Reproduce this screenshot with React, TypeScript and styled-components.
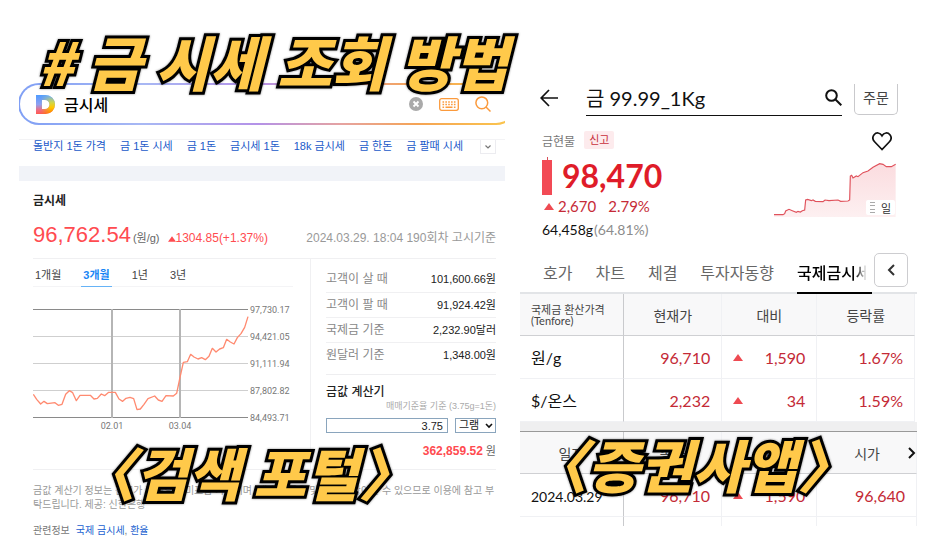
import React from "react";
import styled, { createGlobalStyle, css } from "styled-components";

const KR = `"Noto Sans CJK KR", sans-serif`;

const GlobalStyle = createGlobalStyle`
  *, *::before, *::after { box-sizing: border-box; }
  body { margin: 0; background: #fff; }
  h1, h2, h3, p, dl, dd, dt { margin: 0; font-weight: 400; }
  button, input, select { font: inherit; color: inherit; margin: 0; }
  button { cursor: pointer; padding: 0; border: 0; background: none; }
  a { text-decoration: none; }
`;

const Page = styled.div`
  position: relative;
  display: grid;
  grid-template-columns: minmax(0, 486fr) minmax(0, 397fr);
  gap: 15px;
  min-height: 540px;
  padding: 83px 23px 0 19px;
  overflow: hidden;
`;

/* ---------- headline lettering ---------- */

const lettering = css`
  position: absolute;
  z-index: 2;
  white-space: nowrap;
  pointer-events: none;
  font-family: ${KR};
  font-weight: 900;
  font-style: italic;
  line-height: 64px;
  color: #ffc94a;
  -webkit-text-stroke: 6px #000;
  paint-order: stroke fill;
  filter: drop-shadow(0 0 1px rgba(0, 0, 0, 0.45));
  font-feature-settings: "halt";
`;

const Headline = styled.h1`
  ${lettering}
  left: 38px;
  top: 29px;
  font-size: 59px;
`;

const Caption = styled.h2<{ $left: number; $top: number }>`
  ${lettering}
  left: ${(p) => p.$left}px;
  top: ${(p) => p.$top}px;
  font-size: 57px;
`;

/* ---------- portal ---------- */

const Portal = styled.section`
  font-family: "Liberation Sans", ${KR};
  overflow: hidden;
  color: #333;
`;

const SearchBar = styled.form`
  display: flex;
  align-items: center;
  height: 42px;
  margin: 0 -12px 14px -1px;
  padding: 0 24px 0 16px;
  border: 2px solid transparent;
  border-radius: 21px;
  background: linear-gradient(#fff, #fff) padding-box,
    linear-gradient(90deg, #7f9ff5 0%, #a8b8f4 25%, #b492e8 48%, #e6a3a0 65%, #f5a455 80%, #fbc84c 100%) border-box;
`;

const SearchInput = styled.input`
  flex: 1;
  min-width: 0;
  margin-left: 9px;
  padding: 0;
  border: 0;
  outline: 0;
  background: none;
  font-size: 16px;
  font-weight: 500;
  color: #000;
`;

const SearchTools = styled.div`
  display: flex;
  align-items: center;
  gap: 16px;
  button { display: flex; }
`;

const Related = styled.nav`
  display: flex;
  justify-content: space-between;
  height: 27px;
  padding: 0 9px 0 14px;
  border-top: 1px solid #f3f3f5;
`;

const RelatedList = styled.div`
  display: flex;
  gap: 14px;
  white-space: nowrap;
  font-size: 11px;
  line-height: 12px;
  a { color: #2159c9; }
`;

const MoreButton = styled.button`
  display: flex;
  align-items: center;
  justify-content: center;
  width: 16px;
  height: 14px;
  border: 1px solid #ececf0;
  border-top: 0;
`;

const Band = styled.div`
  height: 15px;
  background: #f1f3f8;
`;

const Quote = styled.div`
  padding: 12px 9px 0 14px;
`;

const QuoteTitle = styled.h2`
  font-size: 12px;
  font-weight: 700;
  line-height: 17px;
  color: #222;
`;

const PriceRow = styled.div`
  display: flex;
  align-items: baseline;
  height: 49px;
  padding-top: 11px;
  line-height: 28px;
  border-bottom: 1px solid #f0f0f2;
  white-space: nowrap;
`;

const Price = styled.strong`
  font-size: 22px;
  font-weight: 400;
  color: #ff4b50;
`;

const Unit = styled.span`
  margin: 0 8px 0 2px;
  font-size: 11px;
  color: #666;
`;

const Change = styled.span`
  display: flex;
  align-items: baseline;
  font-size: 12px;
  color: #ff4b50;
`;

const Stamp = styled.time`
  margin-left: auto;
  font-size: 12px;
  color: #999;
`;

const Columns = styled.div`
  display: grid;
  grid-template-columns: minmax(0, 277fr) minmax(0, 186fr);
  border-bottom: 1px solid #f0f0f2;
`;

const ChartSide = styled.div`
  padding-right: 17px;
`;

const RangeTabs = styled.div`
  display: flex;
  gap: 18px;
  height: 28px;
  margin-bottom: 15px;
  border-bottom: 1px solid #f4f4f6;
`;

const RangeTab = styled.button<{ $active?: boolean }>`
  height: 28px;
  padding: 2px 2px 0;
  font-size: 11px;
  font-weight: ${(p) => (p.$active ? 700 : 400)};
  color: ${(p) => (p.$active ? "#1a86f5" : "#444")};
  border-bottom: 1px solid ${(p) => (p.$active ? "#66b3f7" : "transparent")};
`;

const ChartSvg = styled.svg`
  display: block;
  width: 100%;
  text { font-family: Roboto, sans-serif; font-size: 9px; fill: #777; }
`;

const RateSide = styled.div`
  padding: 8px 0 9px 15px;
  border-left: 1px solid #f0f0f2;
`;

const Rates = styled.dl`
  padding-bottom: 7px;
  border-bottom: 1px solid #eeeef0;
`;

const Rate = styled.div`
  display: flex;
  justify-content: space-between;
  height: 25px;
  line-height: 25px;
  white-space: nowrap;
  & + & { border-top: 1px solid #f0f0f2; }
  dt { font-size: 12px; color: #888; }
  dd { font-size: 11px; color: #222; }
`;

const CalcTitle = styled.h3`
  margin-top: 10px;
  font-size: 12px;
  font-weight: 500;
  line-height: 15px;
  color: #222;
`;

const CalcNote = styled.p`
  font-size: 9px;
  line-height: 12px;
  text-align: right;
  color: #aaa;
`;

const CalcForm = styled.form`
  display: flex;
  gap: 7px;
  margin: 6px 0 9px;
`;

const Amount = styled.input`
  flex: 1;
  min-width: 0;
  height: 15px;
  padding: 0 4px;
  border: 1px solid #8aa5bd;
  font-size: 11px;
  text-align: right;
  color: #222;
`;

const SelectWrap = styled.span`
  position: relative;
  display: flex;
  svg { position: absolute; right: 3px; top: 5px; pointer-events: none; }
`;

const UnitSelect = styled.select`
  appearance: none;
  width: 41px;
  height: 15px;
  padding: 0 0 0 3px;
  border: 1px solid #8aa5bd;
  border-radius: 0;
  background: #fff;
  font-size: 11px;
  line-height: 13px;
  color: #222;
`;

const Total = styled.p`
  font-size: 11px;
  line-height: 18px;
  text-align: right;
  color: #666;
  strong { font-size: 12px; font-weight: 700; color: #ff4b50; }
`;

const FinePrint = styled.p`
  margin: 14px 0 12px;
  font-size: 10px;
  line-height: 14px;
  color: #999;
  white-space: nowrap;
`;

const SeeAlso = styled.p`
  display: flex;
  gap: 6px;
  font-size: 10px;
  line-height: 14px;
  color: #777;
  a { color: #1a5fd0; }
`;

/* ---------- trading app ---------- */

const Trading = styled.section`
  font-family: Lato, ${KR};
  color: #111;
`;

const TopBar = styled.header`
  display: flex;
  padding: 1px 19px 0 20px;
`;

const BackButton = styled.button`
  display: flex;
  align-items: center;
  width: 46px;
  height: 28px;
`;

const SymbolBox = styled.label`
  flex: 1;
  min-width: 0;
  display: flex;
  align-items: center;
  height: 32px;
  border-bottom: 1px solid #111;
  padding-bottom: 4px;
`;

const SymbolInput = styled.input`
  flex: 1;
  min-width: 0;
  padding: 0;
  border: 0;
  outline: 0;
  font-size: 20px;
  line-height: 28px;
  color: #111;
`;

const OrderButton = styled.button`
  width: 44px;
  height: 31px;
  margin-left: 12px;
  border: 1px solid #c9c9cc;
  border-top: 0;
  border-radius: 0 0 5px 5px;
  padding-bottom: 4px;
  font-size: 14px;
  color: #444;
`;

const Summary = styled.div`
  display: flex;
  justify-content: space-between;
  padding: 15px 21px 0 22px;
`;

const NameRow = styled.div`
  display: flex;
  align-items: center;
  gap: 9px;
  height: 18px;
  font-size: 12px;
  color: #777;
`;

const Badge = styled.span`
  padding: 0 5px;
  border-radius: 2px;
  background: #fdebed;
  font-size: 11px;
  line-height: 18px;
  color: #c8303c;
`;

const BigPrice = styled.div`
  display: flex;
  align-items: center;
  gap: 9px;
  height: 40px;
  margin-top: 7px;
  strong { font-size: 32px; font-weight: 700; line-height: 40px; color: #df1c29; }
`;

const Delta = styled.div`
  display: flex;
  align-items: center;
  height: 20px;
  font-size: 15px;
  color: #c62b37;
  svg { margin: 0 4px 0 2px; }
  span + span { margin-left: 12px; }
`;

const Volume = styled.p`
  margin-top: 4px;
  font-size: 14px;
  line-height: 20px;
  color: #111;
  span { color: #8c8c8c; margin-left: 1px; }
`;

const SparkSide = styled.div`
  display: flex;
  flex-direction: column;
  align-items: flex-end;
  button { display: flex; margin: 0 4px 11px 0; }
`;

const SparkBox = styled.div`
  position: relative;
  display: flex;
`;

const PeriodChip = styled.button`
  && {
    position: absolute;
    right: 1px;
    bottom: 2px;
    display: flex;
    align-items: center;
    gap: 6px;
    margin: 0;
    padding: 0 4px;
    height: 15px;
    border-radius: 2px;
    background: #fff;
    font-size: 11px;
    color: #333;
  }
`;

const TabBar = styled.div`
  display: flex;
  gap: 23px;
  height: 41px;
  margin-top: 13px;
  padding: 0 9px 0 23px;
  border-bottom: 2px solid #e2e4e7;
`;

const Tab = styled.button`
  height: 39px;
  padding-bottom: 2px;
  font-size: 16px;
  color: #666;
  white-space: nowrap;
`;

const ActiveTab = styled(Tab)`
  flex: 1;
  min-width: 0;
  height: 41px;
  margin-right: -21px;
  overflow: hidden;
  text-align: left;
  font-weight: 500;
  color: #000;
  border-bottom: 2px solid #000;
  span {
    display: block;
    overflow: hidden;
    background: linear-gradient(90deg, #000 58px, transparent 70px);
    background-clip: text;
    color: transparent;
  }
`;

const FoldButton = styled.button`
  display: flex;
  align-items: center;
  justify-content: center;
  width: 34px;
  height: 34px;
  border: 1px solid #cdcdd0;
  border-radius: 5px;
`;

const Grid = styled.table<{ $strong?: boolean }>`
  width: 100%;
  table-layout: fixed;
  border-collapse: separate;
  border-spacing: 0;
  border-top: ${(p) => (p.$strong ? "1px solid #999" : "0")};

  th, td {
    padding: 0 11px 0 0;
    border-right: 1px solid #f0f1f4;
    border-bottom: 1px solid #f0f1f4;
    font-weight: 400;
  }
  th:first-child, td:first-child { border-right-color: #c9cacd; }
  thead th {
    height: 42px;
    padding: 0;
    background: #f8f8f9;
    border-bottom-color: #cfd0d3;
    font-size: 14px;
    text-align: center;
    color: #444;
  }
  tbody th { padding-left: 11px; font-size: 16px; text-align: left; }
  tbody td { height: 43px; font-size: 16px; text-align: right; color: #c42a36; }
`;

const TableInset = styled.div`
  padding-right: 2px;
`;

const SmallHead = styled.span`
  display: block;
  padding-left: 11px;
  font-size: 11px;
  line-height: 11px;
  text-align: left;
  white-space: nowrap;
`;

const DiffCell = styled.div`
  display: flex;
  align-items: center;
  justify-content: space-between;
  padding-left: 11px;
`;

const ScrollHead = styled.div`
  display: flex;
  align-items: center;
  justify-content: flex-end;
  button { display: flex; }
  span { margin-right: 28px; }
`;

const Divider = styled.div`
  height: 9px;
  background: #efeff0;
`;

const DateCell = styled.span`
  font-size: 14px;
  color: #111;
`;

const Tail = styled.tr`
  && td { height: 9px; border-bottom: 0; }
`;

const Up = ({ w = 10, h = 7, fill = "#ee4a52" }: { w?: number; h?: number; fill?: string }) => (
  <svg width={w} height={h} viewBox="0 0 10 7" aria-hidden="true">
    <path d="M5 0 10 7H0Z" fill={fill} />
  </svg>
);

const DaumMark = () => (
  <svg width="19" height="19" viewBox="0 0 19 19" aria-hidden="true">
    <defs>
      <linearGradient id="dLeft" x1="0" y1="0" x2="0" y2="1">
        <stop offset="0" stopColor="#4f9cff" />
        <stop offset=".5" stopColor="#8f9ff0" />
        <stop offset=".8" stopColor="#f06a7e" />
        <stop offset="1" stopColor="#ff5a50" />
      </linearGradient>
      <linearGradient id="dRight" x1="0" y1="0" x2="0" y2="1">
        <stop offset="0" stopColor="#6fb0f5" />
        <stop offset=".4" stopColor="#cfd64a" />
        <stop offset=".65" stopColor="#ffc800" />
        <stop offset="1" stopColor="#ff7a00" />
      </linearGradient>
      <linearGradient id="dFade" x1="0" y1="0" x2="1" y2="0">
        <stop offset=".25" stopColor="#fff" stopOpacity="0" />
        <stop offset=".75" stopColor="#fff" />
      </linearGradient>
      <mask id="dMask"><rect width="19" height="19" fill="url(#dFade)" /></mask>
    </defs>
    <path d="M0 0h9.500a9.500 9.500 0 0 1 0 19H0ZM6 5v9h3a4.500 4.500 0 0 0 0-9Z" fill="url(#dLeft)" fillRule="evenodd" />
    <path d="M0 0h9.500a9.500 9.500 0 0 1 0 19H0ZM6 5v9h3a4.500 4.500 0 0 0 0-9Z" fill="url(#dRight)" fillRule="evenodd" mask="url(#dMask)" />
  </svg>
);

const relatedTerms = ["돌반지 1돈 가격", "금 1돈 시세", "금 1돈", "금시세 1돈", "18k 금시세", "금 한돈", "금 팔때 시세"];
const ranges = ["1개월", "3개월", "1년", "3년"];
const axis = ["97,730.17", "94,421.05", "91,111.94", "87,802.82", "84,493.71"];
const rates = [
  ["고객이 살 때", "101,600.66원"],
  ["고객이 팔 때", "91,924.42원"],
  ["국제금 기준", "2,232.90달러"],
  ["원달러 기준", "1,348.00원"],
];

const priceLine =
  "40,313 50,328 62,342 72,334 82,341 105,338 115,346 126,343 137,313 148,302 158,308 169,332 180,316 211,316 222,327 232,325 244,312 254,317 266,307 286,307 297,327 308,334 318,325 330,322 341,326 351,359 361,357 372,343 384,326 404,318 415,330 426,334 438,317 460,318 470,310 480,262 490,217 502,215 512,193 522,201 534,207 545,203 556,209 567,199 577,175 588,186 599,177 610,173 620,148 631,156 642,162 652,143 663,131 674,112 684,80";
const sparkLine =
  "763,434 790,434 795,431 798,423 808,418 818,422 830,427 835,424 842,426 848,422 855,420 858,390 864,388 875,392 880,390 887,394 910,395 916,390 928,392 955,390 963,394 985,393 990,390 992,318 996,316 1000,324 1010,318 1015,320 1030,308 1045,303 1060,292 1080,281 1090,283 1100,290 1115,290 1128,283";

const PriceChart = () => (
  <ChartSvg viewBox="0 0 260 131" role="img" aria-label="금시세 3개월 추이">
    {axis.map((label, i) => (
      <g key={label}>
        <rect x="0" y={7 + i * 27} width="215" height="1" fill={i % 4 === 0 ? "#8a8a8a" : "#cfcfcf"} />
        <text x="217" y={11 + i * 27}>{label}</text>
      </g>
    ))}
    <rect x="78" y="7" width="2" height="109" fill="#b5b5b5" />
    <rect x="146" y="7" width="2" height="109" fill="#b5b5b5" />
    <text x="79" y="127" textAnchor="middle">02.01</text>
    <text x="147" y="127" textAnchor="middle">03.04</text>
    <svg x="0" y="7" width="216" height="108" viewBox="39 57 648 324">
      <polyline points={priceLine} fill="none" stroke="#ff8a70" strokeWidth="4" strokeLinejoin="round" />
    </svg>
  </ChartSvg>
);

const Cols = ({ widths }: { widths: string[] }) => (
  <colgroup>
    {widths.map((w, i) => <col key={i} width={w} />)}
  </colgroup>
);
const summaryCols = ["26.4%", "24.8%", "24.1%", "24.7%"];
const historyCols = ["26.2%", "24.7%", "24%", "25.1%"];

export default function App() {
  return (
    <Page>
      <GlobalStyle />
      <Headline># 금 시세 조회 방법</Headline>
      <Caption $left={107} $top={439}>〈검색 포털〉</Caption>
      <Caption $left={559} $top={431}>〈증권사앱〉</Caption>

      <Portal>
        <SearchBar onSubmit={(e) => e.preventDefault()}>
          <DaumMark />
          <SearchInput aria-label="검색어" defaultValue="금시세" />
          <SearchTools>
            <button type="button" aria-label="지우기">
              <svg width="14" height="14" viewBox="0 0 14 14">
                <circle cx="7" cy="7" r="7" fill="#aaa" />
                <path d="m4.500 4.500 5 5m0-5-5 5" stroke="#fff" strokeWidth="1.800" />
              </svg>
            </button>
            <button type="button" aria-label="키보드">
              <svg width="20" height="13" viewBox="0 0 20 13" fill="none" stroke="#fb9a3c">
                <rect x=".7" y=".7" width="18.600" height="11.600" rx="2" strokeWidth="1.300" />
                <path d="M3.500 4h13M3.500 6.500h13" strokeWidth="1.400" strokeDasharray="1.600 1.250" />
                <path d="M3.500 9.300h1.600M6.500 9.300h7M14.900 9.300h1.600" strokeWidth="1.400" />
              </svg>
            </button>
            <button type="submit" aria-label="검색">
              <svg width="16" height="16" viewBox="0 0 16 16" fill="none" stroke="#fb9a3c" strokeWidth="1.500">
                <circle cx="6.800" cy="6.800" r="5.900" />
                <path d="m11 11 4.500 4.500" />
              </svg>
            </button>
          </SearchTools>
        </SearchBar>

        <Related>
          <RelatedList>
            {relatedTerms.map((t) => <a href="#related" key={t}>{t}</a>)}
          </RelatedList>
          <MoreButton aria-label="더보기">
            <svg width="6" height="4" viewBox="0 0 6 4" fill="none" stroke="#777" strokeWidth="1.200"><path d="m.5.500 2.500 2.500L5.500.5" /></svg>
          </MoreButton>
        </Related>
        <Band />

        <Quote>
          <QuoteTitle>금시세</QuoteTitle>
          <PriceRow>
            <Price>96,762.54</Price>
            <Unit>(원/g)</Unit>
            <Change><Up w={8} h={6} fill="#ff4b50" />1304.85(+1.37%)</Change>
            <Stamp>2024.03.29. 18:04 190회차 고시기준</Stamp>
          </PriceRow>

          <Columns>
            <ChartSide>
              <RangeTabs>
                {ranges.map((r, i) => <RangeTab key={r} $active={i === 1}>{r}</RangeTab>)}
              </RangeTabs>
              <PriceChart />
            </ChartSide>
            <RateSide>
              <Rates>
                {rates.map(([k, v]) => <Rate key={k}><dt>{k}</dt><dd>{v}</dd></Rate>)}
              </Rates>
              <CalcTitle>금값 계산기</CalcTitle>
              <CalcNote>매매기준율 기준 (3.75g=1돈)</CalcNote>
              <CalcForm>
                <Amount aria-label="수량" defaultValue="3.75" />
                <SelectWrap>
                  <UnitSelect aria-label="단위"><option>그램</option></UnitSelect>
                  <svg width="8" height="6" viewBox="0 0 8 6" fill="none" stroke="#111" strokeWidth="1.600"><path d="m1 1 3 3 3-3" /></svg>
                </SelectWrap>
              </CalcForm>
              <Total><strong>362,859.52</strong> 원</Total>
            </RateSide>
          </Columns>

          <FinePrint>
            금값 계산기 정보는 참고가 기준으로 미포함 가격이며, 매매 기준율 및 실제와 상이할 수 있으므로 이용에 참고 부
            <br />
            탁드립니다. 제공: 신한은행
          </FinePrint>
          <SeeAlso>
            관련정보
            <span><a href="#gold">국제 금시세</a>, <a href="#fx">환율</a></span>
          </SeeAlso>
        </Quote>
      </Portal>

      <Trading>
        <TopBar>
          <BackButton aria-label="뒤로">
            <svg width="18" height="18" viewBox="0 0 18 18" fill="none" stroke="#111" strokeWidth="1.700"><path d="M18 9H1.500M9 1 1.200 9 9 17" /></svg>
          </BackButton>
          <SymbolBox>
            <SymbolInput aria-label="종목" defaultValue="금 99.99_1Kg" />
            <svg width="17" height="17" viewBox="0 0 17 17" fill="none" stroke="#111" strokeWidth="2">
              <circle cx="6.500" cy="6.500" r="5.300" /><path d="m10.500 10.500 5.800 5.800" />
            </svg>
          </SymbolBox>
          <OrderButton>주문</OrderButton>
        </TopBar>

        <Summary>
          <div>
            <NameRow>금현물<Badge>신고</Badge></NameRow>
            <BigPrice>
              <svg width="11" height="38" viewBox="0 0 11 38" aria-hidden="true">
                <path d="M5 0h1v4H5Z" fill="#d9505a" /><path d="M0 3h10v35H0Z" fill="#f24a55" />
              </svg>
              <strong>98,470</strong>
            </BigPrice>
            <Delta><Up /><span>2,670</span><span>2.79%</span></Delta>
            <Volume>64,458g<span>(64.81%)</span></Volume>
          </div>
          <SparkSide>
            <button aria-label="관심종목">
              <svg width="20" height="20" viewBox="0 0 20 20" fill="none" stroke="#111" strokeWidth="1.700">
                <path d="M10 18.500 2.800 11C.6 8.700.5 5.700 2.100 3.700 4.200 1.200 8 1.300 10 4.700c2-3.400 5.800-3.500 7.900-1 1.600 2 1.500 5-.7 7.300Z" />
              </svg>
            </button>
            <SparkBox>
              <svg width="122" height="55" viewBox="763 276 366 165" role="img" aria-label="금현물 추이">
                <defs>
                  <linearGradient id="spark" x1="0" y1="0" x2="0" y2="1">
                    <stop offset="0" stopColor="#fbdcdf" /><stop offset="1" stopColor="#fdf0f1" />
                  </linearGradient>
                </defs>
                <polygon points={`763,441 ${sparkLine} 1128,441`} fill="url(#spark)" />
                <polyline points={sparkLine} fill="none" stroke="#e0525c" strokeWidth="3.500" />
              </svg>
              <PeriodChip>
                <svg width="5" height="11" viewBox="0 0 5 11" stroke="#aaa"><path d="M0 .5h5M0 3.500h5M0 7.500h5M0 10.500h5" /></svg>
                일
              </PeriodChip>
            </SparkBox>
          </SparkSide>
        </Summary>

        <TabBar>
          <Tab>호가</Tab>
          <Tab>차트</Tab>
          <Tab>체결</Tab>
          <Tab>투자자동향</Tab>
          <ActiveTab><span>국제금시세</span></ActiveTab>
          <FoldButton aria-label="접기">
            <svg width="8" height="12" viewBox="0 0 8 12" fill="none" stroke="#333" strokeWidth="2"><path d="M7 1 2 6l5 5" /></svg>
          </FoldButton>
        </TabBar>

        <TableInset>
          <Grid>
            <Cols widths={summaryCols} />
            <thead>
              <tr>
                <th><SmallHead>국제금 환산가격<br />(Tenfore)</SmallHead></th>
                <th>현재가</th><th>대비</th><th>등락률</th>
              </tr>
            </thead>
            <tbody>
              <tr>
                <th scope="row">원/g</th><td>96,710</td>
                <td><DiffCell><Up />1,590</DiffCell></td><td>1.67%</td>
              </tr>
              <tr>
                <th scope="row">$/온스</th><td>2,232</td>
                <td><DiffCell><Up />34</DiffCell></td><td>1.59%</td>
              </tr>
            </tbody>
          </Grid>
        </TableInset>
        <Divider />
        <Grid $strong>
          <Cols widths={historyCols} />
          <thead>
            <tr>
              <th>일자</th><th>종가</th><th>대비</th>
              <th>
                <ScrollHead>
                  <span>시가</span>
                  <button aria-label="다음 열"><svg width="8" height="12" viewBox="0 0 8 12" fill="none" stroke="#111" strokeWidth="2"><path d="m1 1 5 5-5 5" /></svg></button>
                </ScrollHead>
              </th>
            </tr>
          </thead>
          <tbody>
            <tr>
              <th scope="row"><DateCell>2024.03.29</DateCell></th><td>96,710</td>
              <td><DiffCell><Up />1,590</DiffCell></td><td>96,640</td>
            </tr>
            <Tail><td /><td /><td /><td /></Tail>
          </tbody>
        </Grid>
      </Trading>
    </Page>
  );
}
